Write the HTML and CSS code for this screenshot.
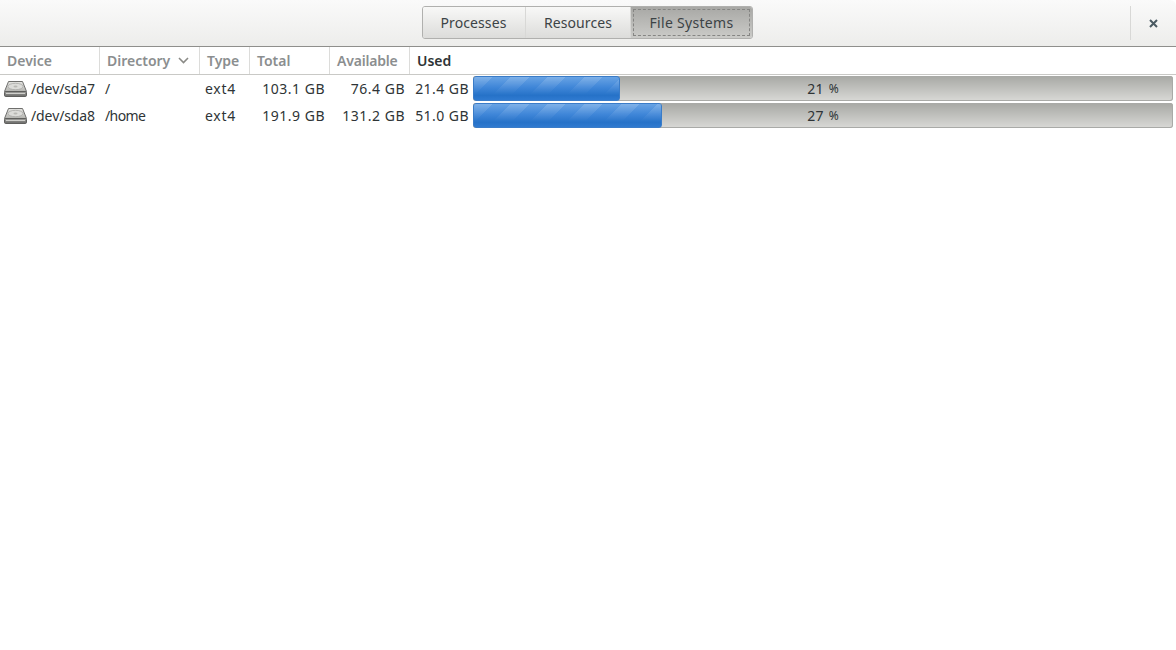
FILE: index.html
```html
<!DOCTYPE html>
<html lang="en">
<head>
<meta charset="utf-8">
<title>System Monitor</title>
<link rel="stylesheet" href="styles.css">
</head>
<body>
<header class="titlebar">
  <div class="tabs">
    <div class="tab tab-processes">Processes</div>
    <div class="tab tab-resources">Resources</div>
    <div class="tab tab-active"><span class="focus">File Systems</span></div>
  </div>
  <div class="close-wrap">
    <svg class="close" width="9" height="9" viewBox="0 0 9 9"><path d="M1 1L8 8M8 1L1 8" stroke="#4a5a62" stroke-width="2" fill="none"/></svg>
  </div>
</header>
<main class="table">
  <div class="head">
    <div class="th">Device</div>
    <div class="th">Directory<svg class="chev" width="11" height="7" viewBox="0 0 11 7"><path d="M1 1L5.500 5.500L10 1" stroke="#8a8a86" stroke-width="1.600" fill="none"/></svg></div>
    <div class="th">Type</div>
    <div class="th">Total</div>
    <div class="th th-avail">Available</div>
    <div class="th th-sorted">Used</div>
  </div>
  <div class="row">
    <div class="td td-device">
      <svg class="disk" width="23" height="16" viewBox="0 0 23 16"><defs><linearGradient id="a" x1="0" y1="0" x2="0" y2="1"><stop offset="0" stop-color="#e6e6e3"/><stop offset="1" stop-color="#b4b4b0"/></linearGradient><linearGradient id="b" x1="0" y1="0" x2="0" y2="1"><stop offset="0" stop-color="#a0a09d"/><stop offset="1" stop-color="#6a6a68"/></linearGradient></defs><path d="M4.500 .5H18.500L22.500 10.500H.5Z" fill="url(#a)" stroke="#6f6f6d"/><ellipse cx="11.500" cy="5.500" rx="7.500" ry="3.200" fill="#dcdcd9" stroke="#a4a4a0" stroke-width=".7"/><ellipse cx="11.500" cy="5.500" rx="2" ry="1" fill="#b8b8b4"/><rect x=".5" y="10.500" width="22" height="5" rx="1.200" fill="url(#b)" stroke="#5f5f5d"/><path d="M2 12.500H21" stroke="#d0d0cc"/></svg>
      <span>/dev/sda7</span>
    </div>
    <div class="td td-dir">/</div>
    <div class="td td-type">ext4</div>
    <div class="td td-num">103.1 GB</div>
    <div class="td td-num">76.4 GB</div>
    <div class="td td-used">
      <span class="used-val">21.4 GB</span>
      <div class="bar"><div class="fill" style="width:147px"></div><span class="pct">21 <span class="pct-sign">%</span></span></div>
    </div>
  </div>
  <div class="row">
    <div class="td td-device">
      <svg class="disk" width="23" height="16" viewBox="0 0 23 16"><path d="M4.500 .5H18.500L22.500 10.500H.5Z" fill="url(#a)" stroke="#6f6f6d"/><ellipse cx="11.500" cy="5.500" rx="7.500" ry="3.200" fill="#dcdcd9" stroke="#a4a4a0" stroke-width=".7"/><ellipse cx="11.500" cy="5.500" rx="2" ry="1" fill="#b8b8b4"/><rect x=".5" y="10.500" width="22" height="5" rx="1.200" fill="url(#b)" stroke="#5f5f5d"/><path d="M2 12.500H21" stroke="#d0d0cc"/></svg>
      <span>/dev/sda8</span>
    </div>
    <div class="td td-dir">/home</div>
    <div class="td td-type">ext4</div>
    <div class="td td-num">191.9 GB</div>
    <div class="td td-num">131.2 GB</div>
    <div class="td td-used">
      <span class="used-val">51.0 GB</span>
      <div class="bar"><div class="fill" style="width:189px"></div><span class="pct">27 <span class="pct-sign">%</span></span></div>
    </div>
  </div>
</main>
</body>
</html>
```
FILE: styles.css
```css
* { box-sizing: border-box; }
html, body { margin: 0; height: 100%; background: #fff; overflow: hidden; }
body { font-family: "Noto Sans", sans-serif; font-size: 14px; color: #2e3436; }

.titlebar {
  height: 47px;
  display: flex;
  justify-content: center;
  padding-top: 6px;
  padding-right: 2px;
  position: relative;
  background: linear-gradient(#fafafa, #ededeb);
  border-bottom: 1px solid #8f8f8c;
  border-top-right-radius: 6px;
}
.tabs {
  display: flex;
  height: 33px;
  border: 1px solid #b0b0ae;
  border-radius: 3px;
  overflow: hidden;
}
.tab {
  display: flex;
  align-items: center;
  justify-content: center;
  height: 100%;
  background: linear-gradient(#f8f8f7, #dcdcda);
  color: #3c4346;
  letter-spacing: .1px;
}
.tab-processes { width: 103px; border-right: 1px solid #d8d8d6; }
.tab-resources { width: 105px; border-right: 1px solid #d8d8d6; padding-left: 1px; }
.tab-active { width: 121px; padding: 2px; background: linear-gradient(#a8a8a5, #cbcbc8); letter-spacing: .3px; }
.focus {
  width: 100%;
  height: 100%;
  display: flex;
  align-items: center;
  justify-content: center;
  border: 1px dashed #858583;
  padding-left: 1px;
}
.close-wrap {
  position: absolute;
  right: 0;
  top: 6px;
  width: 46px;
  height: 34px;
  border-left: 1px solid #d8d8d6;
  display: flex;
  align-items: center;
  justify-content: center;
}

.head, .row {
  display: grid;
  grid-template-columns: 100px 100px 50px 80px 80px 1fr;
}
.head {
  height: 28px;
  background: #fff;
  border-bottom: 1px solid #c9c9c6;
}
.th {
  display: flex;
  align-items: center;
  padding-left: 7px;
  padding-bottom: 1px;
  border-right: 1px solid #dcdcda;
  color: #8b8e8f;
  font-weight: 600;
}
.th:last-child { border-right: 0; }
.th-sorted { color: #2e3436; }
.th-avail { letter-spacing: -.2px; }
.chev { margin-left: 8px; }

.row { height: 27px; align-items: center; }
.td { white-space: nowrap; }
.td-device { display: flex; align-items: center; gap: 4px; padding-left: 4px; letter-spacing: -.1px; }
.disk { flex: none; }
.td-dir { padding-left: 5px; letter-spacing: -.6px; }
.td-type { padding-left: 5px; letter-spacing: .7px; }
.td-num { text-align: right; padding-right: 5px; letter-spacing: .5px; }
.td-used { display: flex; align-items: center; justify-content: flex-start; }
.used-val { width: 59px; margin-right: 4px; text-align: right; flex: none; letter-spacing: .45px; }
.bar {
  position: relative;
  width: 700px;
  height: 25px;
  border-radius: 3px;
  box-shadow: inset 0 0 0 1px #a9aaa7;
  background: linear-gradient(#a7a8a4, #d9d9d6);
  overflow: hidden;
}
.fill {
  position: relative;
  height: 100%;
  border: 1px solid #3a7cc8;
  border-radius: 3px;
  background: linear-gradient(#68a3e4, #3f86d8 45%, #2672c8 80%, #2f7ad0);
}
.fill::before {
  content: "";
  position: absolute;
  inset: 0;
  background: repeating-linear-gradient(135deg, rgba(255,255,255,.16) 0 13px, rgba(255,255,255,0) 13px 26px);
  -webkit-mask-image: linear-gradient(#000, transparent 75%);
  mask-image: linear-gradient(#000, transparent 75%);
}
.pct {
  position: absolute;
  left: 0; right: 0; top: 0; bottom: 0;
  display: flex;
  align-items: center;
  justify-content: center;
  gap: 5px;
  color: #2e3436;
  letter-spacing: .3px;
}
.pct-sign { font-size: 12px; letter-spacing: 0; }
```
